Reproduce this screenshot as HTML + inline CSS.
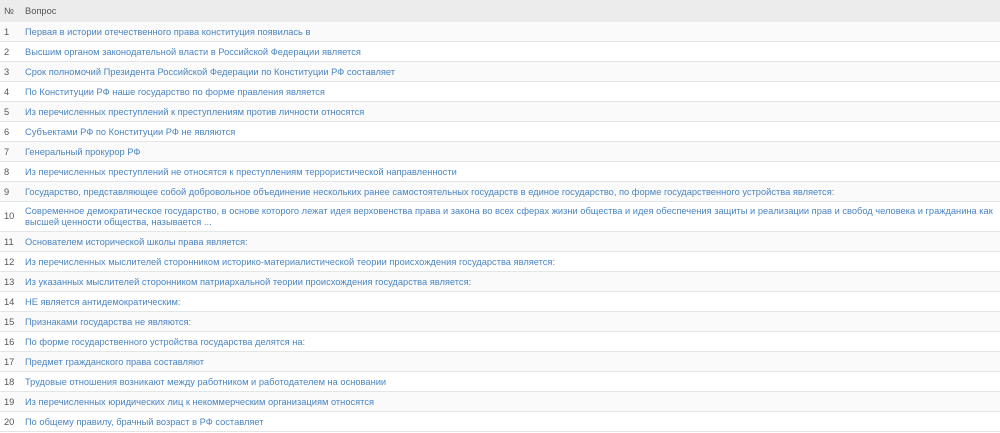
<!DOCTYPE html><html><head><meta charset="utf-8"><style>
body{margin:0;width:1000px;height:433px;overflow:hidden;background:#fff;font-family:"Liberation Sans",sans-serif;font-size:9.3px}
table{border-collapse:collapse;width:1000px}
th{background:#ececec;height:22px;text-align:left;font-weight:normal;color:#555;padding:0}
td{height:19px;border-bottom:1px solid #e3e6e6;padding:0;color:#4a85c2;line-height:10px}
td.n{width:21px;padding-left:4px;color:#555}
th.n{padding-left:4px;width:21px}
td.t{padding-right:4px}
tr:nth-child(even) td{background:#fafafa}
tr.tall td{height:29px;line-height:11px}
</style></head><body><table>
<tr><th class="n">№</th><th>Вопрос</th></tr>
<tr><td class="n">1</td><td class="t">Первая в истории отечественного права конституция появилась в</td></tr>
<tr><td class="n">2</td><td class="t">Высшим органом законодательной власти в Российской Федерации является</td></tr>
<tr><td class="n">3</td><td class="t">Срок полномочий Президента Российской Федерации по Конституции РФ составляет</td></tr>
<tr><td class="n">4</td><td class="t">По Конституции РФ наше государство по форме правления является</td></tr>
<tr><td class="n">5</td><td class="t">Из перечисленных преступлений к преступлениям против личности относятся</td></tr>
<tr><td class="n">6</td><td class="t">Субъектами РФ по Конституции РФ не являются</td></tr>
<tr><td class="n">7</td><td class="t">Генеральный прокурор РФ</td></tr>
<tr><td class="n">8</td><td class="t">Из перечисленных преступлений не относятся к преступлениям террористической направленности</td></tr>
<tr><td class="n">9</td><td class="t">Государство, представляющее собой добровольное объединение нескольких ранее самостоятельных государств в единое государство, по форме государственного устройства является:</td></tr>
<tr class="tall"><td class="n">10</td><td class="t">Современное демократическое государство, в основе которого лежат идея верховенства права и закона во всех сферах жизни общества и идея обеспечения защиты и реализации прав и свобод человека и гражданина как<br>высшей ценности общества, называется ...</td></tr>
<tr><td class="n">11</td><td class="t">Основателем исторической школы права является:</td></tr>
<tr><td class="n">12</td><td class="t">Из перечисленных мыслителей сторонником историко-материалистической теории происхождения государства является:</td></tr>
<tr><td class="n">13</td><td class="t">Из указанных мыслителей сторонником патриархальной теории происхождения государства является:</td></tr>
<tr><td class="n">14</td><td class="t">НЕ является антидемократическим:</td></tr>
<tr><td class="n">15</td><td class="t">Признаками государства не являются:</td></tr>
<tr><td class="n">16</td><td class="t">По форме государственного устройства государства делятся на:</td></tr>
<tr><td class="n">17</td><td class="t">Предмет гражданского права составляют</td></tr>
<tr><td class="n">18</td><td class="t">Трудовые отношения возникают между работником и работодателем на основании</td></tr>
<tr><td class="n">19</td><td class="t">Из перечисленных юридических лиц к некоммерческим организациям относятся</td></tr>
<tr><td class="n">20</td><td class="t">По общему правилу, брачный возраст в РФ составляет</td></tr>
</table></body></html>
